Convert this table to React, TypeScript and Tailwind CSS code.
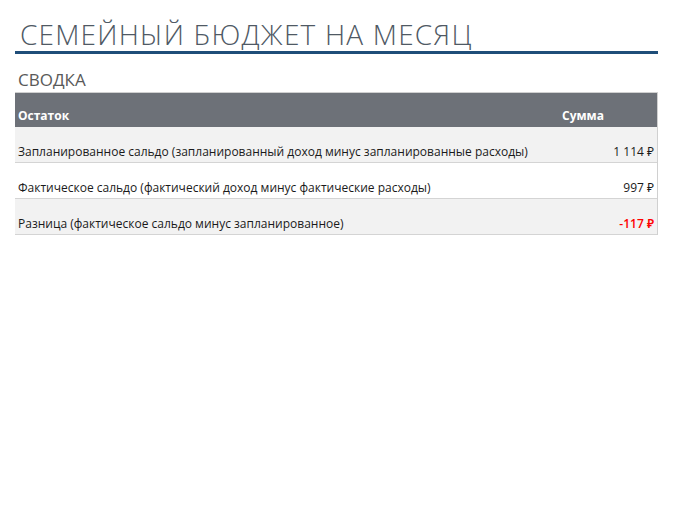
export default function App() {
  const rows = [
    { label: "Запланированное сальдо (запланированный доход минус запланированные расходы)", value: "1 114 ₽", neg: false, shade: true },
    { label: "Фактическое сальдо (фактический доход минус фактические расходы)", value: "997 ₽", neg: false, shade: false },
    { label: "Разница (фактическое сальдо минус запланированное)", value: "-117 ₽", neg: true, shade: true },
  ];

  return (
    <div className="w-[675px] h-[520px] bg-white pl-[15px] pt-[17px]" style={{ fontFamily: "'Open Sans', 'Noto Sans', sans-serif" }}>
      <div className="w-[643px]">
        {/* Title */}
        <h1 className="text-[28px] leading-[34px] font-light text-[#4f5964] pl-[5px] border-b-[3px] border-[#1f4e79] tracking-[1.2px]">
          СЕМЕЙНЫЙ БЮДЖЕТ НА МЕСЯЦ
        </h1>

        {/* Summary */}
        <h2 className="mt-[16px] text-[17px] leading-[19px] text-[#595959] pl-[3px]">СВОДКА</h2>

        <div className="mt-[3px] border-t border-r border-[#d0d0d0]">
          <div className="flex items-end h-[34px] bg-[#6d7178] text-white font-bold text-[12px] pb-[2px]">
            <div className="flex-1 pl-[3px]">Остаток</div>
            <div className="w-[98px] pl-[3px]">Сумма</div>
          </div>
          {rows.map((r) => (
            <div
              key={r.label}
              className={`flex items-end h-[36px] border-b border-[#d4d4d4] text-[12px] text-[#1a1a1a] pb-[1px] ${r.shade ? "bg-[#f2f2f2]" : "bg-white"}`}
            >
              <div className="flex-1 pl-[3px] whitespace-nowrap">{r.label}</div>
              <div className={`w-[98px] pr-[3px] text-right ${r.neg ? "text-[#ff0000] font-semibold" : ""}`}>{r.value}</div>
            </div>
          ))}
        </div>
      </div>
    </div>
  );
}
